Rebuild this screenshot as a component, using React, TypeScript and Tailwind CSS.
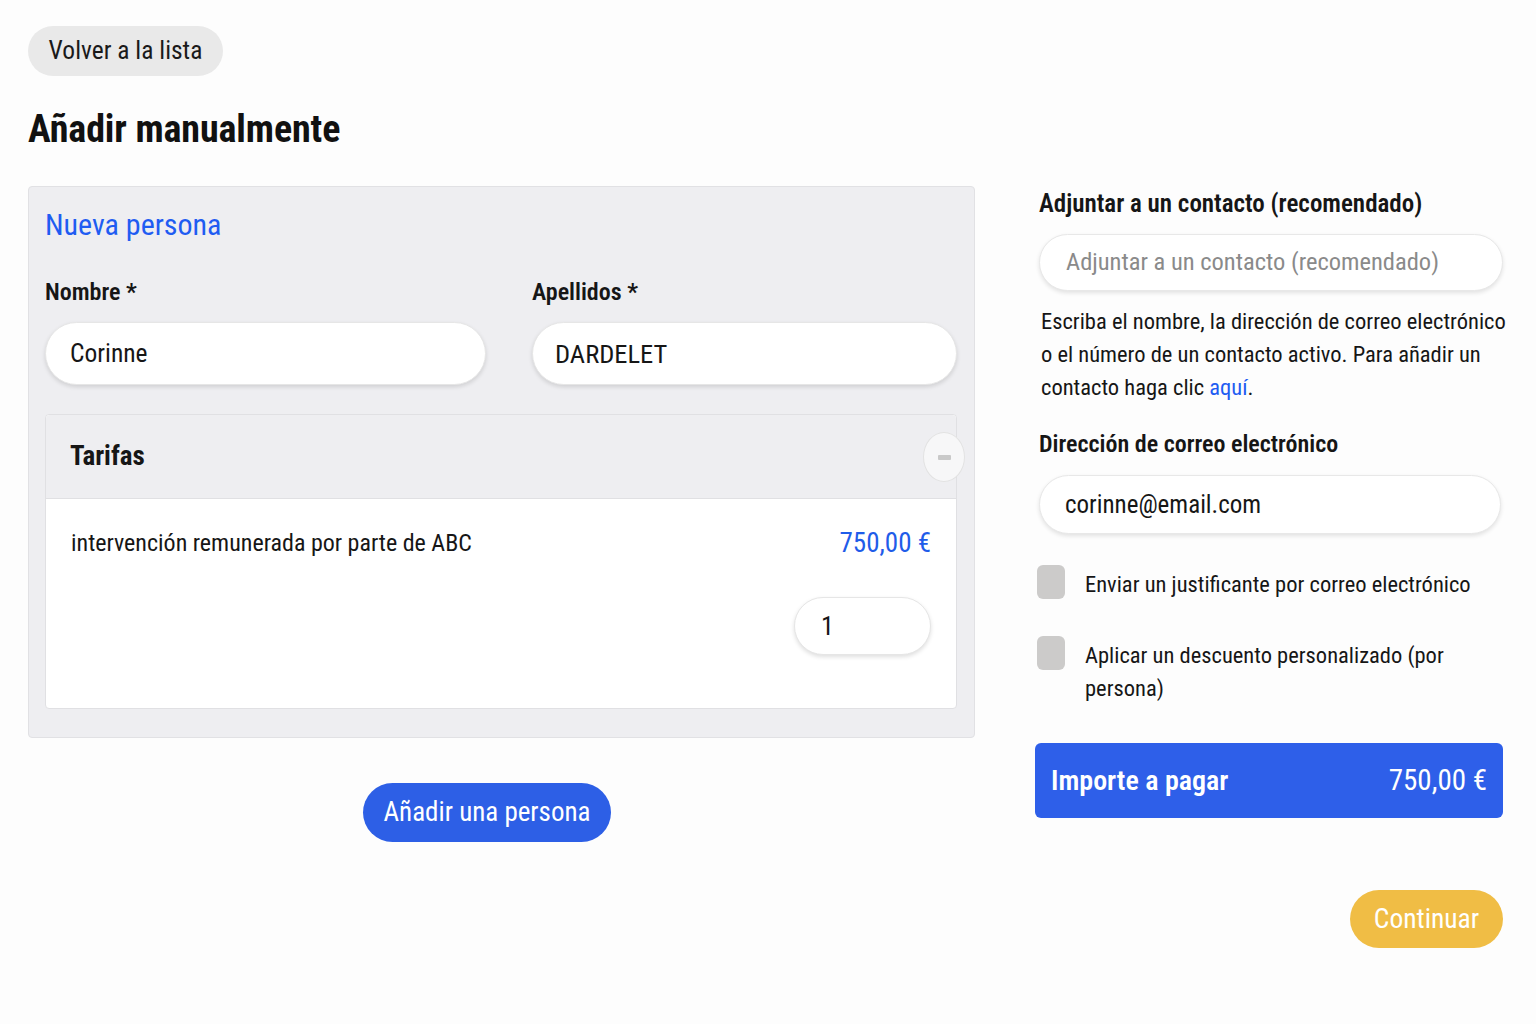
import React from "react";

export default function App() {
  return (
    <div className="min-h-[1024px] w-full bg-[#fdfdfd] font-['Roboto',sans-serif] [font-stretch:80%] text-[#161616] pl-[28px] pr-[33px] pt-[26px]">
      <button className="h-[50px] w-[195px] rounded-full bg-[#e9e9e9] text-[25.5px] leading-none text-[#1a1a1a]">
        Volver a la lista
      </button>
      <h1 className="mt-[31px] text-[38px] leading-[45px] font-bold tracking-[-0.1px] text-[#111]">
        Añadir manualmente
      </h1>

      <div className="mt-[34px] flex items-start">
        {/* Left column */}
        <div className="w-[947px] shrink-0">
          <div className="rounded-[4px] border border-[#e1e1e4] bg-[#eeeef1] pl-[16px] pr-[17px] pt-[20px] pb-[28px]">
            <div className="text-[30px] leading-[36px] text-[#1f5cf2]">Nueva persona</div>
            <div className="mt-[34px] grid grid-cols-[441px_425px] gap-x-[46px]">
              <div>
                <div className="text-[24px] leading-[30px] font-semibold">Nombre *</div>
                <div className="mt-[15px] flex h-[63px] items-center rounded-full border border-[#e6e6e6] bg-white pl-[24px] text-[25.5px] shadow-[0_2px_4px_rgba(0,0,0,0.13)]">
                  Corinne
                </div>
              </div>
              <div>
                <div className="text-[24px] leading-[30px] font-semibold">Apellidos *</div>
                <div className="mt-[15px] flex h-[63px] items-center rounded-full border border-[#e6e6e6] bg-white pl-[22px] text-[26.5px] shadow-[0_2px_4px_rgba(0,0,0,0.13)]">
                  DARDELET
                </div>
              </div>
            </div>

            <div className="mt-[29px] rounded-[4px] border border-[#e0e0e3] bg-white">
              <div className="relative flex h-[84px] items-center rounded-t-[4px] border-b border-[#e0e0e3] bg-[#eeeef1] pl-[24px]">
                <span className="text-[27px] font-bold leading-none">Tarifas</span>
                <div className="absolute right-[-9px] top-[17px] flex h-[50px] w-[42px] items-center justify-center rounded-[50%] border border-[#e2e2e2] bg-[#f7f7f8]">
                  <div className="h-[5px] w-[13px] rounded-[1px] bg-[#c9c9c9]" />
                </div>
              </div>
              <div className="px-[25px] pt-[29px] pb-[53px]">
                <div className="flex items-start justify-between">
                  <span className="text-[24px] leading-[30px]">intervención remunerada por parte de ABC</span>
                  <span className="text-[27px] leading-[30px] text-[#1f5ce9]">750,00 €</span>
                </div>
                <div className="mt-[39px] flex justify-end">
                  <div className="flex h-[58px] w-[137px] items-center rounded-full border border-[#e6e6e6] bg-white pl-[26px] text-[26px] shadow-[0_2px_4px_rgba(0,0,0,0.13)]">
                    1
                  </div>
                </div>
              </div>
            </div>
          </div>

          <button className="ml-[335px] mt-[45px] h-[59px] w-[248px] rounded-full bg-[#2d5fe6] text-[27px] leading-none text-white">
            Añadir una persona
          </button>
        </div>

        {/* Right column */}
        <div className="ml-[60px] w-[468px] shrink-0 pt-[3px]">
          <div className="ml-[4px]">
            <div className="text-[25px] leading-[30px] font-semibold">Adjuntar a un contacto (recomendado)</div>
            <div className="mt-[15px] flex h-[57px] items-center rounded-full border border-[#e8e8e8] bg-white pl-[26px] text-[24.5px] text-[#8a8a8a] shadow-[0_2px_4px_rgba(0,0,0,0.11)]">
              Adjuntar a un contacto (recomendado)
            </div>
            <p className="mt-[14px] pl-[2px] text-[22.5px] leading-[33px]">
              <span className="block whitespace-nowrap">Escriba el nombre, la dirección de correo electrónico</span>
              <span className="block whitespace-nowrap">o el número de un contacto activo. Para añadir un</span>
              <span className="block whitespace-nowrap">
                contacto haga clic <span className="text-[#1f5cf2]">aquí</span>.
              </span>
            </p>
            <div className="mt-[25px] text-[24px] leading-[30px] font-semibold">Dirección de correo electrónico</div>
            <div className="mt-[16px] mr-[2px] flex h-[59px] items-center rounded-full border border-[#e8e8e8] bg-white pl-[25px] text-[25px] shadow-[0_2px_4px_rgba(0,0,0,0.11)]">
              corinne@email.com
            </div>
            <div className="mt-[31px] flex items-start">
              <div className="-ml-[2px] h-[34px] w-[28px] shrink-0 rounded-[6px] bg-[#cccbca]" />
              <span className="ml-[20px] mt-[3px] text-[22.5px] leading-[33px]">Enviar un justificante por correo electrónico</span>
            </div>
            <div className="mt-[35px] flex items-start">
              <div className="-ml-[2px] h-[34px] w-[28px] shrink-0 rounded-[6px] bg-[#cccbca]" />
              <span className="ml-[20px] mt-[3px] text-[22.5px] leading-[33px]">Aplicar un descuento personalizado (por persona)</span>
            </div>
          </div>
          <div className="mt-[38px] flex h-[75px] items-center justify-between rounded-[6px] bg-[#2e5fe9] pl-[16px] pr-[16px] text-white">
            <span className="text-[28px] font-semibold">Importe a pagar</span>
            <span className="text-[29px]">750,00 €</span>
          </div>
          <div className="mt-[72px] flex justify-end">
            <button className="h-[58px] w-[153px] rounded-full bg-[#f0bd45] text-[27.5px] leading-none text-white">
              Continuar
            </button>
          </div>
        </div>
      </div>
    </div>
  );
}
